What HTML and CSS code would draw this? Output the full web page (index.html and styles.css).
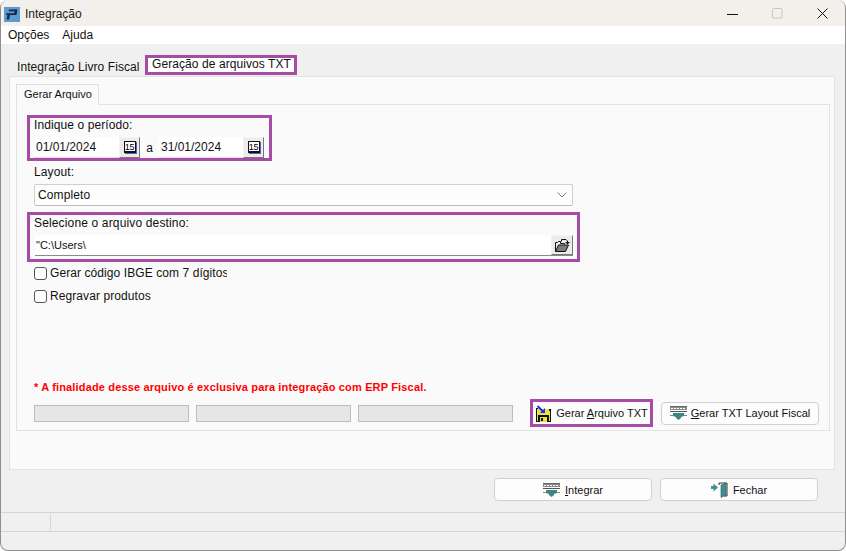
FILE: index.html
```html
<!DOCTYPE html>
<html lang="pt">
<head>
<meta charset="utf-8">
<title>Integração</title>
<link rel="stylesheet" href="styles.css">
</head>
<body>
<div class="window">
  <header class="titlebar">
    <svg class="app-icon" width="16" height="15" viewBox="0 0 16 15"><rect width="16" height="15" fill="#5a9bd0"/><path d="M5 2.500h8.500l-1 5.500H6l-.9 4.500H2.600L3.500 8H2l.4-1.800h7.800l.4-2H4.700z" fill="#14294a"/></svg>
    <span class="title-text">Integração</span>
    <div class="win-controls">
      <svg width="11" height="1" viewBox="0 0 11 1" class="ctl-min"><rect width="11" height="1" fill="#111"/></svg>
      <svg width="11" height="11" viewBox="0 0 11 11"><rect x=".5" y=".5" width="9.500" height="9.500" rx="1" fill="none" stroke="#c8c6c3"/></svg>
      <svg width="11" height="11" viewBox="0 0 11 11"><path d="M.5.500l10 10M10.500.500l-10 10" stroke="#111" stroke-width="1"/></svg>
    </div>
  </header>
  <nav class="menubar"><span>Opções</span><span>Ajuda</span></nav>
  <main class="client">
    <div class="outer-tabs">
      <span class="outer-tab">Integração Livro Fiscal</span>
      <span class="outer-tab active">Geração de arquivos TXT</span>
    </div>
    <section class="outer-page">
      <div class="inner-tabs"><span class="inner-tab">Gerar Arquivo</span></div>
      <div class="inner-panel">
        <div class="mark period">
          <div class="label">Indique o período:</div>
          <div class="date-row">
            <div class="date-field"><span>01/01/2024</span><span class="cal-btn"><span class="cal-glyph">15</span></span></div>
            <span class="date-sep">a</span>
            <div class="date-field"><span>31/01/2024</span><span class="cal-btn"><span class="cal-glyph">15</span></span></div>
          </div>
        </div>
        <div class="label layout-label">Layout:</div>
        <div class="select">
          <span>Completo</span>
          <svg width="10" height="6" viewBox="0 0 10 6"><path d="M.5.500L5 5l4.500-4.500" fill="none" stroke="#7a7a7a"/></svg>
        </div>
        <div class="mark dest">
          <div class="label">Selecione o arquivo destino:</div>
          <div class="path-field">
            <span class="path-text">"C:\Users\</span>
            <span class="open-btn">
              <svg width="16" height="15" viewBox="0 0 16 15"><path d="M7.500 3.500V1.500h4.500l1.500 1.500V5" fill="none" stroke="#111"/><path d="M11 4l2.500 2.500L16 4z" fill="#111"/><path d="M1.500 13.500V4.500h2l1-1h2v2h4v1" fill="#eee" stroke="#111"/><path d="M1.500 13.500l3-6.500h10l-3 6.500z" fill="#7c7c7c" stroke="#111"/></svg>
            </span>
          </div>
        </div>
        <label class="check first"><span class="box"></span><span class="check-text">Gerar código IBGE com 7 dígitos</span></label>
        <label class="check second"><span class="box"></span><span>Regravar produtos</span></label>
        <div class="notice">* A finalidade desse arquivo é exclusiva para integração com ERP Fiscal.</div>
        <div class="action-row">
          <div class="bars"><span class="bar"></span><span class="bar"></span><span class="bar"></span></div>
          <div class="mark mark-btn">
            <button class="btn inner">
              <svg width="17" height="17" viewBox="0 0 17 17"><path d="M1 3h2v1h10l3 0v13H1z" fill="#111"/><rect x="3" y="4" width="11" height="6" fill="#efe23a"/><rect x="2" y="4" width="1" height="12" fill="#efe23a"/><rect x="14" y="6" width="1" height="10" fill="#efe23a"/><rect x="5" y="12" width="7" height="5" fill="#efe23a"/><rect x="6" y="13" width="2" height="3" fill="#111"/><path d="M2.500 1L9 7.500" stroke="#1a2cf0" stroke-width="2"/><path d="M5 8h5V3z" fill="#1a2cf0"/></svg>
              <span>Gerar <u>A</u>rquivo TXT</span>
            </button>
          </div>
          <button class="btn wide">
            <svg width="17" height="14" viewBox="0 0 17 14"><use href="#net-icon"/></svg>
            <span><u>G</u>erar TXT Layout Fiscal</span>
          </button>
        </div>
      </div>
    </section>
    <div class="bottom-row">
      <button class="btn big">
        <svg width="17" height="14" viewBox="0 0 17 14"><use href="#net-icon"/></svg>
        <span><u>I</u>ntegrar</span>
      </button>
      <button class="btn big">
        <svg width="17" height="16" viewBox="0 0 17 16"><path d="M0 4h2.500V1.500L7 5.500 2.500 9.500V7H0z" fill="#3f8f8f"/><path d="M8 3V1h8v13h-3" fill="none" stroke="#333"/><path d="M10 3l5-2v12l-5 2.500z" fill="#3f8f8f" stroke="#2d5a5a" stroke-width=".6"/></svg>
        <span>Fechar</span>
      </button>
    </div>
  </main>
  <footer class="statusbar"><span class="status-cell"></span></footer>
  <div class="footer-strip"></div>
</div>
<svg class="defs" width="0" height="0"><defs>
  <g id="net-icon">
    <rect x="0" y="0" width="17" height="1" fill="#666"/>
    <rect x="0" y="1" width="17" height="3" fill="#8a8a8a"/>
    <path d="M1 2.500h2M4 2.500h2M7 2.500h2M10 2.500h2M13 2.500h2" stroke="#fff"/>
    <rect x="0" y="5" width="17" height="1" fill="#555"/>
    <rect x="0" y="9" width="17" height="1" fill="#888"/>
    <path d="M3 7h11v3l-3 1v1l-2.500 2L6 12v-1l-3-1z" fill="#3c8585"/>
  </g>
</defs></svg>
</body>
</html>
```
FILE: styles.css
```css
* { box-sizing: border-box; }
html, body { margin: 0; padding: 0; background: #fff; }
body { font-family: "Liberation Sans", Arial, sans-serif; font-size: 12px; color: #111; }
.defs { position: absolute; }

.window {
  width: 846px; height: 551px; display: flex; flex-direction: column;
  background: #f0f0f0; border: 1px solid #8f8f8f; border-top: 0;
  border-radius: 8px; overflow: hidden;
}
.titlebar { height: 26px; flex: none; background: #f3efeb; display: flex; align-items: center; padding-left: 3px; }
.app-icon { margin-top: 2px; margin-right: 5px; }
.title-text { font-size: 12px; color: #222; margin-top: 2px; }
.win-controls { margin-left: auto; display: flex; align-items: center; gap: 34px; height: 26px; padding-right: 17px; padding-top: 1px; }
.ctl-min { margin-top: 1px; }

.menubar { height: 18px; flex: none; background: #fff; display: flex; gap: 13px; align-items: center; padding-left: 7px; font-size: 12px; }

.client { height: 468px; flex: none; display: flex; flex-direction: column; padding: 13px 10px 0 8px; }

.outer-tabs { height: 19px; display: flex; padding-left: 1px; flex: none; position: relative; z-index: 1; }
.outer-tab { height: 19px; padding: 3px 0 0 7px; width: 135px; white-space: nowrap; font-size: 12px; letter-spacing: .08px; }
.outer-tab.active {
  width: 152px; height: 20px; margin-top: -2px; padding: 2px 0 0 7px; background: #fff;
  outline: 3px solid #a64ca6; outline-offset: -3px;
}

.outer-page { height: 394px; flex: none; background: #fafafa; border: 1px solid #e3e3e3; padding: 7px 4px 0 6px; }

.inner-tabs { height: 21px; display: flex; position: relative; z-index: 1; margin-bottom: -1px; }
.inner-tab { width: 83px; height: 21px; background: #fafafa; border: 1px solid #e0e0e0; border-bottom-color: #fafafa; padding: 3px 0 0 7px; font-size: 11px; }

.inner-panel { height: 327px; border: 1px solid #e3e3e3; padding: 10px 10px 0 10px; display: flex; flex-direction: column; }

.mark { border: 3px solid #a64ca6; flex: none; }
.label { font-size: 12px; height: 14px; line-height: 14px; white-space: nowrap; letter-spacing: .1px; }

.period { width: 245px; height: 46px; padding: 0 4px; }
.date-row { display: flex; align-items: center; margin-top: 5px; }
.date-field { width: 106px; height: 21px; background: #fff; display: flex; align-items: center; justify-content: space-between; padding-left: 2px; border-bottom: 1px solid #ddd; }
.date-field:last-child { width: 105px; }
.date-sep { width: 19px; text-align: center; }
.cal-btn { width: 21px; height: 21px; background: #ececec; display: flex; align-items: center; justify-content: center; border: 1px solid; border-color: #f4f4f4 #777 #777 #f4f4f4; }
.cal-glyph { width: 12px; height: 12px; font-size: 9px; line-height: 10px; text-align: center; background: #fff; border: 1px solid #111; border-bottom-width: 2px; color: #000; letter-spacing: -.3px; box-shadow: 1px 1px 0 #5a5ad0; }

.layout-label { margin-top: 4px; margin-left: 7px; }
.select { width: 539px; height: 22px; flex: none; margin: 5px 0 0 7px; background: #fdfdfd; border: 1px solid #cfcfcf; border-bottom-color: #bdbdbd; border-radius: 2px; display: flex; align-items: center; justify-content: space-between; padding: 0 5px 0 3px; letter-spacing: .1px; }

.dest { width: 553px; height: 50px; margin-top: 6px; padding: 0 4px; }
.dest .label { margin-top: 1px; letter-spacing: .15px; }
.path-field { height: 21px; margin: 5px 0 0 1px; width: 538px; background: #fff; border-bottom: 1px solid #8a8a8a; display: flex; align-items: center; justify-content: space-between; padding-left: 1px; font-size: 11px; }
.open-btn { width: 22px; height: 20px; background: #ececec; display: flex; align-items: center; justify-content: center; border: 1px solid; border-color: #f4f4f4 #777 #777 #f4f4f4; }

.check { display: flex; align-items: center; gap: 3px; margin-left: 7px; height: 14px; flex: none; white-space: nowrap; letter-spacing: .08px; }
.check.first { margin-top: 4px; }
.check.second { margin-top: 9px; }
.box { width: 13px; height: 13px; background: #fdfdfd; border: 1px solid #555; border-radius: 3px; flex: none; }
.check-text { width: 177px; overflow: hidden; }

.notice { margin: 77px 0 0 7px; height: 14px; line-height: 14px; color: #f00; font-size: 11px; font-weight: 700; letter-spacing: .16px; flex: none; }

.action-row { display: flex; align-items: center; margin-top: 5px; flex: none; height: 28px; margin-left: 7px; }
.bars { display: flex; gap: 7px; width: 479px; flex: none; }
.bar { width: 155px; height: 17px; background: #e6e6e6; border: 1px solid #bdbdbd; }

.btn { font: inherit; color: #111; background: #fdfdfd; border: 1px solid #d0d0d0; border-radius: 4px; display: flex; align-items: center; justify-content: center; gap: 5px; padding: 0; height: 23px; cursor: default; white-space: nowrap; flex: none; }
.btn span { font-size: 11px; }
.mark-btn { margin-left: 17px; width: 123px; height: 28px; background: #fdfdfd; }
.btn.inner { width: 117px; height: 22px; border: 0; background: transparent; gap: 4px; }
.btn.wide { width: 158px; margin-left: 8px; gap: 4px; }

.bottom-row { flex: none; display: flex; justify-content: flex-end; gap: 8px; margin-top: 8px; padding-right: 17px; }
.btn.big { width: 158px; }

.statusbar { height: 20px; flex: none; border-top: 1px solid #d6d6d6; border-bottom: 1px solid #d6d6d6; display: flex; }
.status-cell { width: 50px; border-right: 1px solid #d6d6d6; margin: 1px 0; }
.footer-strip { flex: 1; }
```
